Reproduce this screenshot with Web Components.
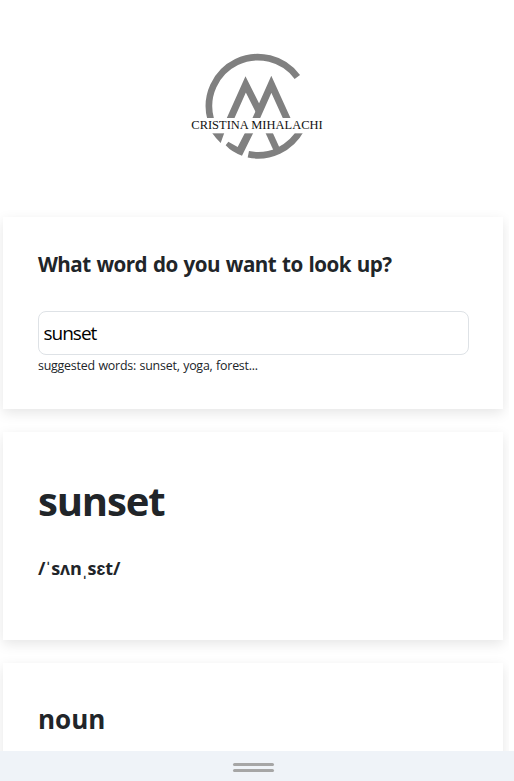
<!DOCTYPE html>
<html lang="en"><head><meta charset="utf-8"><title>Dictionary</title>
<style>html,body{margin:0;height:100%;overflow:hidden;background:#fff}</style></head>
<body><dictionary-app></dictionary-app>
<script>
const define=(name,html)=>{const t=document.createElement('template');t.innerHTML=html;
customElements.define(name,class extends HTMLElement{constructor(){super();this.attachShadow({mode:'open'}).append(t.content.cloneNode(true));}});};
define('brand-logo',`<style>:host{display:block;width:150px;height:125px}svg{display:block;width:100%;height:100%}</style>
<svg viewBox="0 0 450 375"><g fill="none" stroke="#808080" stroke-width="20">
<path d="M346 99A147 147 0 0 0 86 225"/><path d="M199 331A147 147 0 0 0 357 257"/>
<path stroke-width="21" d="M142 231L191 121L231 201"/><path stroke-width="21" d="M219 231L268 121L318 231"/><path d="M257 257L288 325"/></g>
<path fill="#808080" d="M91 266H127L116 297Q102 284 91 268ZM139 293L167 309L189 266H214L180 335Q150 325 131 304Z"/>
<rect x="20" y="222" width="415" height="46" fill="#fff"/>
<text x="28" y="255" textLength="394" lengthAdjust="spacingAndGlyphs" font-family="Liberation Serif,serif" font-size="35" fill="#111">CRISTINA MIHALACHI</text></svg>`);
define('word-card',`<style>:host{display:block;box-sizing:border-box;padding:0 35px;background:#fff;box-shadow:0 4px 12px rgba(0,0,0,.1)}</style><slot></slot>`);
define('search-field',`<style>:host{display:block}input{display:block;box-sizing:border-box;width:431px;height:44px;margin:0;padding:2px 5px 2px 4.5px;border:1px solid #dee2e6;border-radius:8px;background:#fff;color:#000;font:19px "Open Sans",sans-serif;letter-spacing:-1px;outline:0}</style><input value="sunset" aria-label="Word">`);
define('drag-bar',`<style>:host{display:flex;flex-direction:column;align-items:center;justify-content:center;gap:3px;height:30px;padding-right:7px;padding-top:3px;box-sizing:border-box;background:#eff3f8}i{width:41px;height:3px;border-radius:2px;background:#a6a6a6}</style><i></i><i></i>`);
define('dictionary-app',`<style>:host{display:flex;flex-direction:column;height:781px;color:#212529;font-family:"Open Sans",sans-serif}
main{height:751px;width:509px;overflow:hidden}brand-logo{margin:44px 0 48px 182px}
word-card{width:500px;margin:0 0 23px 3px}.a{height:192px}.b{height:208px}.c{height:200px}
h1,h2,h3,h4,p{margin:0;white-space:nowrap;width:max-content}
h2{font-size:20.6px;line-height:28px;padding:33px 0 33px;letter-spacing:-.55px;word-spacing:1.1px}
p{font-size:12.4px;line-height:22px;letter-spacing:-.21px;word-spacing:.5px}
h1{font-size:40px;line-height:48px;padding-top:45px;letter-spacing:-1.15px}h4{font-size:18px;line-height:24px;padding-top:31px;letter-spacing:-.1px}
h3{font-size:26px;line-height:34px;padding-top:39px}</style>
<main><brand-logo></brand-logo><word-card class="a"><h2>What word do you want to look up?</h2><search-field></search-field><p>suggested words: sunset, yoga, forest...</p></word-card>
<word-card class="b"><h1>sunset</h1><h4>/ˈsʌnˌsɛt/</h4></word-card><word-card class="c"><h3>noun</h3></word-card></main><drag-bar></drag-bar>`);
</script></body></html>
